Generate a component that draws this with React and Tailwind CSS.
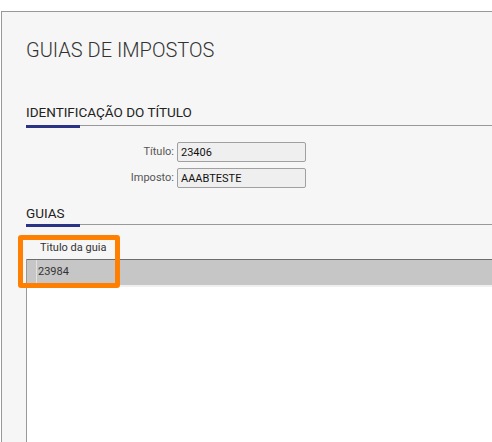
import React from "react";

const SectionHeader = ({ title, pad }) => (
  <div className="ml-[24px]">
    <h2 className={`text-[13.5px] leading-[16px] text-[#222] ${pad}`}>{title}</h2>
    <div className="flex items-start">
      <div className="h-[3px] w-[54px] bg-[#2b3384]" />
      <div className="h-px flex-1 bg-[#999]" />
    </div>
  </div>
);

const Field = ({ label, value }) => (
  <div className="flex items-center gap-[3px]">
    <label className="w-[148px] text-right text-[11px] text-[#555]">{label}</label>
    <input
      readOnly
      value={value}
      className="h-[20px] w-[129px] rounded-[2px] border border-[#a0a0a0] bg-[#efefef] px-[3px] text-[11px] text-[#111] outline-none"
    />
  </div>
);

const App = () => {
  return (
    <div
      className="h-[442px] w-full overflow-hidden bg-white pl-px pt-[11px]"
      style={{ fontFamily: "Roboto, 'Liberation Sans', sans-serif" }}
    >
      <div className="relative flex h-[431px] w-[600px] flex-col border-l border-t border-[#999] bg-[#f6f6f6]">
        <h1 className="ml-[24px] mt-[24px] h-[28px] text-[20px] font-light leading-[28px] text-[#333]">
          GUIAS DE IMPOSTOS
        </h1>

        <div className="mt-[40px]">
          <SectionHeader title="IDENTIFICAÇÃO DO TÍTULO" pad="pb-[5px]" />
        </div>

        <div className="ml-[24px] mt-[14px] flex flex-col gap-[6px]">
          <Field label="Título:" value="23406" />
          <Field label="Imposto:" value="AAABTESTE" />
        </div>

        <div className="mt-[17px]">
          <SectionHeader title="GUIAS" pad="pb-[3px]" />
        </div>

        <div className="ml-[24px] flex flex-1 flex-col">
          <div className="h-[32px] pl-[14px] pt-[14px] text-[11px] leading-[13px] text-[#333]">
            Titulo da guia
          </div>
          <div className="flex-1 border-l border-[#999] bg-white">
            <div className="border-t border-[#6d6d6d]">
              <div className="flex h-[25px] items-center bg-[#c6c6c6]">
                <div className="h-full w-[9px]" />
                <div className="flex h-full items-center border-l border-[#e2e2e2] pl-px text-[11px] text-[#333]">
                  23984
                </div>
              </div>
              <div className="h-[2px] bg-[#efefef]" />
            </div>
          </div>
        </div>

        <div className="absolute left-[16px] top-[223px] h-[53px] w-[102px] rounded-[3px] border-[5px] border-[#ff8000]" />
      </div>
    </div>
  );
};

export default App;
